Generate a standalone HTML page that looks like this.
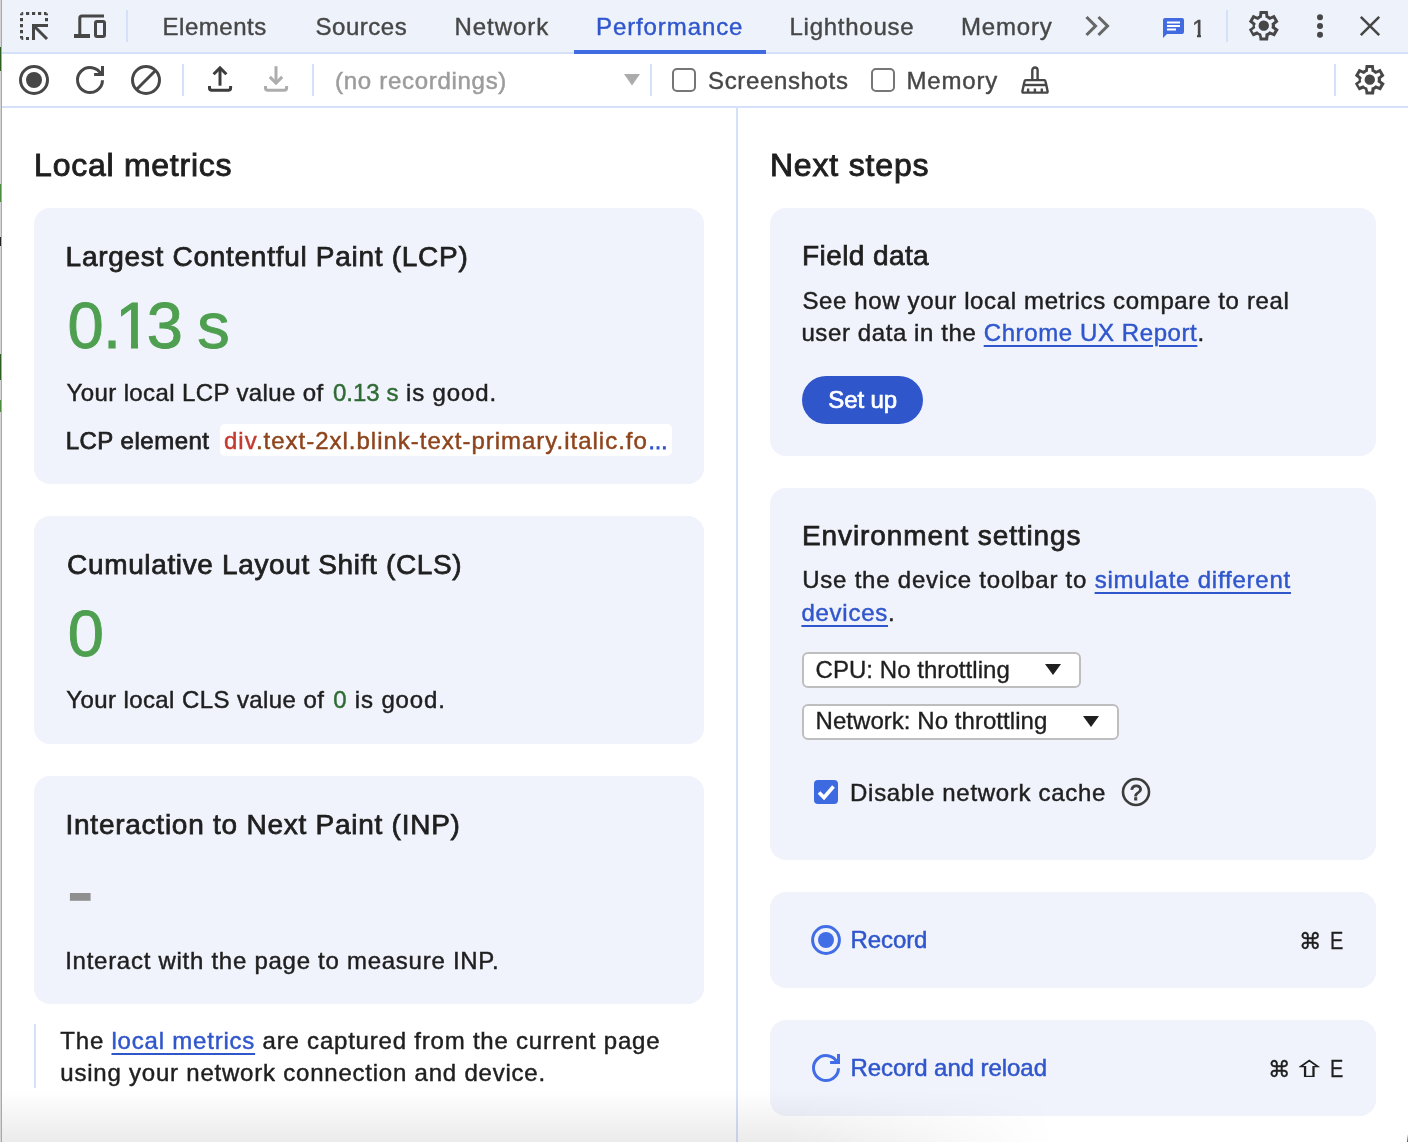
<!DOCTYPE html>
<html lang="en">
<head>
<meta charset="utf-8">
<title>DevTools - Performance</title>
<style>
*{box-sizing:border-box;margin:0;padding:0}
html,body{width:1408px;height:1142px;overflow:hidden;background:#fff}
body{position:relative;will-change:transform;font-family:"Liberation Sans",sans-serif;color:#1f1f1f;-webkit-font-smoothing:antialiased}
.abs{position:absolute}
.t{position:absolute;white-space:nowrap;line-height:1}
#edge{left:0;top:0;width:2px;height:1142px;background:linear-gradient(90deg,#d4d4d4 0,#d4d4d4 1px,#a9a9a9 1px,#a9a9a9 2px)}
#tabbar{left:2px;top:0;width:1406px;height:52px;background:#eef2fb}
#tabline{left:2px;top:52px;width:1406px;height:2px;background:#d5e1f9}
#toolbar{left:2px;top:54px;width:1406px;height:52px;background:#fff}
#toolline{left:2px;top:106px;width:1406px;height:2px;background:#d5e1f9}
.tab{font-size:24px;color:#474747;top:14.7px;-webkit-text-stroke:0.4px}
.vsep{position:absolute;width:2px;background:#d5e1f9}
.card{position:absolute;background:#f0f3fb;border-radius:16px}
h1.t{font-size:32px;font-weight:normal;color:#1f1f1f;-webkit-text-stroke:0.9px #1f1f1f}
h2.t{font-size:28px;font-weight:normal;color:#1f1f1f;-webkit-text-stroke:0.75px #1f1f1f}
.p{font-size:24px;color:#1f1f1f;-webkit-text-stroke:0.45px}
.big{font-size:65px;color:#4e9f50;-webkit-text-stroke:0.9px}
.good{color:#2f6b34}
a{color:#3056cc;text-decoration:underline;text-decoration-thickness:1.8px;text-underline-offset:3.6px}

.cb{width:24px;height:24px;border:2px solid #767676;border-radius:5px;background:#fff}
.tb{font-size:24px;color:#474747;-webkit-text-stroke:0.4px}

.med{-webkit-text-stroke:0.75px #1f1f1f}
.sel{background:#fff;border:2px solid #bebebe;border-radius:6px}
.selt{font-size:24px;color:#1f1f1f;-webkit-text-stroke:0.35px}
.act{font-size:24px;color:#3056cc;-webkit-text-stroke:0.5px #3056cc}
.kbd{font-size:24px;color:#1f1f1f}
.cmd{font-family:"DejaVu Sans",sans-serif;font-size:22.4px;-webkit-text-stroke:0.35px}
.shf{font-family:"Noto Sans CJK JP",sans-serif;font-size:26px;-webkit-text-stroke:1.1px;transform:scale(1.1,0.66);transform-origin:0 0}
.ke{font-size:23.2px;transform:scaleX(0.86);transform-origin:0 0;-webkit-text-stroke:0.3px}
svg{position:absolute;overflow:visible}
</style>
</head>
<body>
<svg width="0" height="0" style="left:0;top:0"><defs>
<g id="gear"><path fill="#474747" fill-rule="evenodd" d="M9.25 22l-.4-3.2c-.22-.08-.42-.18-.61-.3-.2-.12-.38-.24-.57-.37L4.7 19.37l-2.75-4.75 2.57-1.95A2.4 2.4 0 0 1 4.5 12.34v-.68c0-.1.01-.22.02-.33L1.95 9.38 4.700 4.630l2.970 1.240c.19-.13.38-.26.580-.370.2-.12.400-.22.600-.3L9.250 2h5.500l.4 3.200c.22.080.42.180.61.300.2.120.38.240.57.370l2.970-1.240 2.750 4.750-2.570 1.950c.1.110.2.220.2.330v.68c0 .1-.2.220-.05.330l2.570 1.950-2.750 4.750-2.950-1.250c-.19.130-.38.260-.58.370-.2.120-.4.220-.6.300l-.4 3.210h-5.490zM11 20h1.970l.35-2.650c.52-.13 1-.33 1.440-.590.440-.260.850-.570 1.210-.940l2.480 1.030.97-1.700-2.150-1.630c.08-.23.140-.48.180-.740.030-.260.050-.520.050-.790s-.02-.530-.05-.790a3.200 3.200 0 0 0-.18-.74l2.150-1.630-.97-1.700-2.480 1.050c-.37-.38-.77-.7-1.210-.960a5.450 5.450 0 0 0-1.440-.590L13 4h-1.970l-.35 2.650c-.52.130-1 .33-1.440.590-.440.260-.850.570-1.210.940L5.550 7.150l-.97 1.700L6.700 10.450c-.8.250-.14.500-.18.750-.3.250-.5.520-.5.800 0 .270.020.530.050.780.030.250.090.5.180.750l-2.130 1.630.98 1.700 2.470-1.050c.37.380.77.700 1.210.960.440.260.920.460 1.440.590L11 20zm1.050-4.500c.97 0 1.790-.34 2.480-1.020.68-.68 1.020-1.510 1.020-2.480 0-.97-.34-1.790-1.020-2.480A3.400 3.400 0 0 0 12.050 8.500c-.98 0-1.810.34-2.490 1.020A3.400 3.400 0 0 0 8.550 12c0 .97.340 1.790 1.010 2.480.68.680 1.510 1.020 2.490 1.020z"/></g>
</defs></svg>
<div id="tabbar" class="abs"></div>
<div id="tabline" class="abs"></div>
<div id="toolbar" class="abs"></div>
<div id="toolline" class="abs"></div>
<div id="edge" class="abs"></div>

<div class="abs" style="left:0;top:47px;width:1px;height:24px;background:#2f5f20"></div>
<div class="abs" style="left:0;top:184px;width:1px;height:18px;background:#4b8b3b"></div>
<div class="abs" style="left:0;top:237px;width:1px;height:9px;background:#222"></div>
<div class="abs" style="left:0;top:354px;width:1px;height:26px;background:#2f5f20"></div>
<div class="abs" style="left:0;top:400px;width:1px;height:12px;background:#4b8b3b"></div>
<div class="abs" style="left:1407px;top:1134px;width:1px;height:8px;background:linear-gradient(180deg,rgba(60,60,60,0),#555)"></div>
<!-- TABS -->
<span class="t tab" id="tab1" style="letter-spacing:0.54px;left:162.5px">Elements</span>
<span class="t tab" id="tab2" style="letter-spacing:0.50px;left:315.6px">Sources</span>
<span class="t tab" id="tab3" style="letter-spacing:0.92px;left:454.6px">Network</span>
<span class="t tab" id="tab4" style="letter-spacing:0.90px;left:596.0px;color:#3056cc">Performance</span>
<span class="t tab" id="tab5" style="letter-spacing:0.74px;left:789.5px">Lighthouse</span>
<span class="t tab" id="tab6" style="letter-spacing:0.80px;left:961.0px">Memory</span>
<div class="abs" id="tabsel" style="left:574px;top:50.4px;width:192px;height:3.6px;background:#3f6be3"></div>
<div class="vsep" style="left:126px;top:10px;height:32px"></div>
<div class="vsep" style="left:1226px;top:10px;height:32px"></div>


<!-- TAB BAR ICONS -->
<svg id="ic_inspect" style="left:14px;top:6px" width="40" height="40" viewBox="0 0 40 40" fill="none" stroke="#474747">
  <path d="M7.5 7.5H32.5" stroke-width="3" stroke-dasharray="3.2 2.8" stroke-dashoffset="1.5"/>
  <path d="M7.5 7.5V32.5" stroke-width="3" stroke-dasharray="3.2 2.8" stroke-dashoffset="1.5"/>
  <path d="M32.5 7.5V16" stroke-width="3" stroke-dasharray="3.2 2.8" stroke-dashoffset="1.5"/>
  <path d="M7.5 32.5H15" stroke-width="3" stroke-dasharray="3.2 2.8" stroke-dashoffset="1.5"/>
  <path d="M34 19.5H19.5V34" stroke-width="3"/>
  <path d="M20.5 20.5L33 33" stroke-width="3"/>
</svg>
<svg id="ic_device" style="left:70px;top:6px" width="40" height="40" viewBox="0 0 40 40" fill="none" stroke="#474747">
  <path d="M34 10H12Q9.8 10 9.8 12.2V29" stroke-width="3"/>
  <path d="M4 30H20" stroke-width="4"/>
  <rect x="25.5" y="15.5" width="9" height="15" rx="1.5" stroke-width="3"/>
</svg>
<svg id="ic_more" style="left:1084px;top:14px" width="28" height="24" viewBox="0 0 28 24" fill="none" stroke="#676767" stroke-width="3.1">
  <path d="M2.5 3L11.5 12L2.5 21"/>
  <path d="M14.5 3L23.5 12L14.5 21"/>
</svg>
<svg id="ic_msg" style="left:1163px;top:18px" width="21" height="21" viewBox="0 0 21 21">
  <path d="M2 0H19Q21 0 21 2V14Q21 16 19 16H4L0 20V2Q0 0 2 0Z" fill="#426ae1"/>
  <path d="M4 4.5H17M4 8H17M4 11.5H13" stroke="#fff" stroke-width="1.8"/>
</svg>
<span class="t" id="msgcount" style="left:1192px;top:16.9px;font-size:24px;color:#474747;-webkit-text-stroke:0.4px">1</span>
<div class="abs" style="left:1192px;top:34.4px;width:5px;height:4px;background:#eef2fb"></div>
<div class="abs" style="left:1201px;top:34.4px;width:5.5px;height:4px;background:#eef2fb"></div>
<svg id="ic_gear1" class="gear" style="left:1246.3px;top:7.8px" width="35.4" height="35.4" viewBox="0 0 24 24"><use href="#gear"/></svg>
<svg id="ic_dots" style="left:1314px;top:12px" width="12" height="28" viewBox="0 0 12 28" fill="#474747">
  <circle cx="6" cy="5.3" r="3"/><circle cx="6" cy="14" r="3"/><circle cx="6" cy="22.8" r="3"/>
</svg>
<svg id="ic_close" style="left:1358px;top:14px" width="24" height="24" viewBox="0 0 24 24" fill="none" stroke="#474747" stroke-width="2.6">
  <path d="M2.8 2.8L21.2 21.2M21.2 2.8L2.8 21.2"/>
</svg>

<!-- TOOLBAR -->
<svg id="ic_rec" style="left:18px;top:64px" width="32" height="32" viewBox="0 0 32 32">
  <circle cx="16" cy="16" r="13.5" fill="none" stroke="#474747" stroke-width="3"/>
  <circle cx="16" cy="16" r="8" fill="#474747"/>
</svg>
<svg id="ic_reload" style="left:75px;top:64.8px" width="30" height="30" viewBox="0 0 30 30" fill="none" stroke="#474747" stroke-width="3">
  <path d="M27.5 15.2A12.5 12.5 0 1 1 26.33 9.72"/>
  <path d="M27.5 1V9.4H19.1"/>
</svg>
<svg id="ic_clear" style="left:130px;top:64px" width="32" height="32" viewBox="0 0 32 32" fill="none" stroke="#474747" stroke-width="3">
  <circle cx="16" cy="16" r="13.5"/>
  <path d="M6.5 25.5L25.5 6.5"/>
</svg>
<div class="vsep" style="left:182px;top:64px;height:32px"></div>
<svg id="ic_up" style="left:206px;top:64px" width="28" height="30" viewBox="0 0 28 30" fill="none" stroke="#3c3c3c" stroke-width="3">
  <path d="M14 21.7V3.9"/>
  <path d="M7.6 10.3L14 3.9L20.4 10.3"/>
  <path d="M3.5 22V24Q3.5 26.3 5.8 26.3H22.3Q24.6 26.3 24.6 24V22"/>
</svg>
<svg id="ic_down" style="left:262px;top:64px" width="28" height="30" viewBox="0 0 28 30" fill="none" stroke="#adadad" stroke-width="3">
  <path d="M14 2.2V19"/>
  <path d="M7.8 12.9L14 19.1L20.2 12.9"/>
  <path d="M3.5 22V24Q3.5 26.3 5.8 26.3H22.3Q24.6 26.3 24.6 24V22"/>
</svg>
<div class="vsep" style="left:312px;top:64px;height:32px"></div>
<span class="t" id="norec" style="left:335.0px;top:68.7px;font-size:24px;color:#9c9c9c;-webkit-text-stroke:0.5px;letter-spacing:0.71px">(no recordings)</span>
<svg id="ic_dd" style="left:624px;top:74px" width="16" height="12" viewBox="0 0 16 12"><path d="M0 0H16L8 11.5Z" fill="#ababab"/></svg>
<div class="vsep" style="left:650px;top:64px;height:32px"></div>
<div class="abs cb" id="cb1" style="left:672px;top:68px"></div>
<span class="t tb" id="lblshots" style="letter-spacing:0.65px;left:708.0px;top:69.1px">Screenshots</span>
<div class="abs cb" id="cb2" style="left:871px;top:68px"></div>
<span class="t tb" id="lblmem" style="letter-spacing:0.80px;left:906.5px;top:69.1px">Memory</span>
<svg id="ic_broom" style="left:1020px;top:66px" width="30" height="28" viewBox="0 0 30 28" fill="none" stroke="#474747" stroke-width="2.4">
  <path d="M12.3 14V4.2A2.65 2.65 0 0 1 17.6 4.2V14"/>
  <path d="M6 14.1H24Q25.3 14.1 25.5 15.4L27.6 25.2Q27.8 26.6 26.6 26.6H3.4Q2.2 26.6 2.4 25.2L4.5 15.4Q4.7 14.1 6 14.1Z"/>
  <path d="M4 19H26"/>
  <path d="M8.1 26V22.5M14.9 26V22.5M21.8 26V22.5"/>
</svg>
<div class="vsep" style="left:1334px;top:64px;height:32px"></div>
<svg id="ic_gear2" class="gear" style="left:1352px;top:62px" width="35.4" height="35.4" viewBox="0 0 24 24"><use href="#gear"/></svg>

<!-- PANES -->
<div class="vsep" id="split" style="left:736px;top:108px;height:1034px"></div>


<!-- LEFT PANE -->
<h1 class="t" id="h_local" style="letter-spacing:0.74px;left:34.1px;top:148.9px">Local metrics</h1>

<div class="card" id="card1" style="left:34px;top:208px;width:670px;height:276px"></div>
<h2 class="t" id="h_lcp" style="letter-spacing:0.72px;left:65.6px;top:242.7px">Largest Contentful Paint (LCP)</h2>
<span class="t big" id="big_lcp" style="left:65px;top:293.3px"><span id="bc0" style="margin-left:2.45px">0</span><span id="bc1" style="margin-left:-0.55px">.</span><span id="bc2" style="margin-left:-5.86px">1</span><span id="bc3" style="margin-left:-4.75px">3</span> <span id="bc5" style="margin-left:-3.7px">s</span></span>
<div class="abs" id="foot1a" style="left:118px;top:341px;width:13px;height:9px;background:#f0f3fb"></div>
<div class="abs" id="foot1b" style="left:138px;top:341px;width:11.4px;height:9px;background:#f0f3fb"></div>
<span class="p" id="p_lcp"><span class="t" id="p_lcp_a" style="letter-spacing:0.38px;left:66.6px;top:380.7px">Your local LCP value of</span> <span class="t good" id="g_lcp" style="letter-spacing:0.00px;left:333.0px;top:380.7px">0.13 s</span> <span class="t" id="p_lcp_c" style="letter-spacing:0.86px;left:406.0px;top:380.7px">is good.</span></span>
<span class="t p med" id="lbl_lcpel" style="letter-spacing:0.50px;left:65.7px;top:429.1px">LCP element</span>
<div class="abs" id="pill" style="left:220px;top:424px;width:452px;height:32px;background:#fff;border-radius:5px"></div>
<span class="t p" id="sel_lcp" style="letter-spacing:0.99px;left:224.0px;top:429.1px;color:#8e441c"><span style="color:#c43a30">div</span>.text-2xl.blink-text-primary.italic.fo<span style="color:#3056cc;font-size:20px;letter-spacing:0;margin-left:0.3px;-webkit-text-stroke:1px">…</span></span>

<div class="card" id="card2" style="left:34px;top:516px;width:670px;height:228px"></div>
<h2 class="t" id="h_cls" style="letter-spacing:0.64px;left:67.1px;top:550.6px">Cumulative Layout Shift (CLS)</h2>
<span class="t big" id="big_cls" style="left:67.8px;top:600.9px">0</span>
<span class="p" id="p_cls"><span class="t" id="p_cls_a" style="letter-spacing:0.41px;left:66.2px;top:688.4px">Your local CLS value of</span> <span class="t good" id="g_cls" style="left:333.3px;top:688.4px">0</span> <span class="t" id="p_cls_c" style="letter-spacing:0.86px;left:354.8px;top:688.4px">is good.</span></span>

<div class="card" id="card3" style="left:34px;top:776px;width:670px;height:228px"></div>
<h2 class="t" id="h_inp" style="letter-spacing:0.75px;left:65.5px;top:810.9px">Interaction to Next Paint (INP)</h2>
<span class="t big" id="big_inp" style="left:67.3px;top:852.2px;font-size:78px;color:#8f8f8f;-webkit-text-stroke:1.6px">-</span>
<span class="t p" id="p_inp" style="letter-spacing:0.73px;left:65.2px;top:948.5px">Interact with the page to measure INP.</span>

<div class="vsep" id="notebar" style="left:34px;top:1024px;height:64px"></div>
<span class="t p" id="note1" style="letter-spacing:0.79px;left:60.3px;top:1028.8px">The <a id="a_local">local metrics</a> are captured from the current page</span>
<span class="t p" id="note2" style="letter-spacing:0.78px;left:60.3px;top:1061.2px">using your network connection and device.</span>

<!-- RIGHT PANE -->
<h1 class="t" id="h_next" style="letter-spacing:0.84px;left:769.9px;top:148.8px">Next steps</h1>

<div class="card" id="card4" style="left:770px;top:208px;width:606px;height:248px"></div>
<h2 class="t" id="h_field" style="letter-spacing:0.41px;left:802.0px;top:242.3px">Field data</h2>
<span class="t p" id="p_f1" style="letter-spacing:0.64px;left:802.4px;top:289.4px">See how your local metrics compare to real</span>
<span class="t p" id="p_f2" style="letter-spacing:0.60px;left:801.4px;top:321.0px">user data in the <a id="a_crux">Chrome UX Report</a>.</span>
<div class="abs" id="btn" style="left:802px;top:376px;width:121px;height:48px;border-radius:24px;background:#3056cc"></div>
<span class="t" id="btn_t" style="letter-spacing:-0.10px;left:828.3px;top:387.8px;font-size:24px;color:#fff;-webkit-text-stroke:0.7px #fff">Set up</span>

<div class="card" id="card5" style="left:770px;top:488px;width:606px;height:372px"></div>
<h2 class="t" id="h_env" style="letter-spacing:0.90px;left:802.0px;top:522.3px">Environment settings</h2>
<span class="t p" id="p_e1" style="letter-spacing:0.78px;left:802.2px;top:568.3px">Use the device toolbar to <a id="a_sim1">simulate different</a></span>
<span class="t p" id="p_e2" style="letter-spacing:0.75px;left:801.4px;top:600.6px"><a id="a_sim2">devices</a>.</span>
<div class="abs sel" id="sel_cpu" style="left:802px;top:652px;width:279px;height:36px"></div>
<span class="t selt" id="t_cpu" style="letter-spacing:0.05px;left:815.5px;top:657.5px">CPU: No throttling</span>
<svg id="arr_cpu" style="left:1045px;top:663.5px" width="16" height="11" viewBox="0 0 16 11"><path d="M0 0H16L8 11Z" fill="#1f1f1f"/></svg>
<div class="abs sel" id="sel_net" style="left:802px;top:704px;width:317px;height:36px"></div>
<span class="t selt" id="t_net" style="letter-spacing:0.05px;left:815.5px;top:709.3px">Network: No throttling</span>
<svg id="arr_net" style="left:1082.8px;top:715.5px" width="16" height="11" viewBox="0 0 16 11"><path d="M0 0H16L8 11Z" fill="#1f1f1f"/></svg>
<div class="abs" id="cb3" style="left:814px;top:780px;width:24px;height:24px;border-radius:4px;background:#3d6ae1"></div>
<svg id="cb3c" style="left:814px;top:780px" width="24" height="24" viewBox="0 0 24 24" fill="none" stroke="#fff" stroke-width="3.6"><path d="M5 12.5L10 17.5L19.5 6.5"/></svg>
<span class="t p" id="lbl_cache" style="letter-spacing:0.69px;left:850.1px;top:780.8px">Disable network cache</span>
<svg id="ic_help" style="left:1121px;top:777px" width="30" height="30" viewBox="0 0 30 30">
  <circle cx="15" cy="15" r="13" fill="none" stroke="#3c3c3c" stroke-width="2.6"/>
  <text x="15" y="22.8" text-anchor="middle" font-family="Liberation Sans, sans-serif" font-size="22" fill="#3c3c3c" stroke="#3c3c3c" stroke-width="0.9">?</text>
</svg>

<div class="card" id="card6" style="left:770px;top:892px;width:606px;height:96px"></div>
<svg id="ic_rec2" style="left:811.2px;top:924.9px" width="30" height="30" viewBox="0 0 30 30">
  <circle cx="15" cy="15" r="13.4" fill="none" stroke="#416de6" stroke-width="3"/>
  <circle cx="15" cy="15" r="8" fill="#416de6"/>
</svg>
<span class="t act" id="t_rec" style="letter-spacing:-0.10px;left:850.5px;top:927.7px">Record</span>
<span class="kbd" id="k1"><span class="t cmd" id="k1c" style="left:1299.1px;top:930.0px">⌘</span> <span class="t ke" id="k1e" style="left:1329.8px;top:930.0px">E</span></span>

<div class="card" id="card7" style="left:770px;top:1020px;width:606px;height:96px"></div>
<svg id="ic_rel2" style="left:811px;top:1053px" width="30" height="30" viewBox="0 0 30 30" fill="none" stroke="#416de6" stroke-width="3">
  <path d="M27.5 15.2A12.5 12.5 0 1 1 26.33 9.72"/>
  <path d="M27.5 1V9.4H19.1"/>
</svg>
<span class="t act" id="t_rel" style="letter-spacing:-0.06px;left:850.5px;top:1055.6px">Record and reload</span>
<span class="kbd" id="k2"><span class="t cmd" id="k2c" style="left:1268.1px;top:1057.5px">⌘</span> <span class="t shf" id="k2s" style="left:1295.0px;top:1058.8px">⇧</span> <span class="t ke" id="k2e" style="left:1330.2px;top:1057.7px">E</span></span>

<div class="abs" id="shade" style="left:2px;top:1090px;width:1406px;height:52px;background:linear-gradient(180deg,rgba(0,0,0,0) 0,rgba(0,0,0,0.08) 100%);-webkit-mask-image:linear-gradient(100deg,#000 0,#000 56%,transparent 75%);mask-image:linear-gradient(100deg,#000 0,#000 56%,transparent 75%)"></div>

<!-- END -->
</body>
</html>
